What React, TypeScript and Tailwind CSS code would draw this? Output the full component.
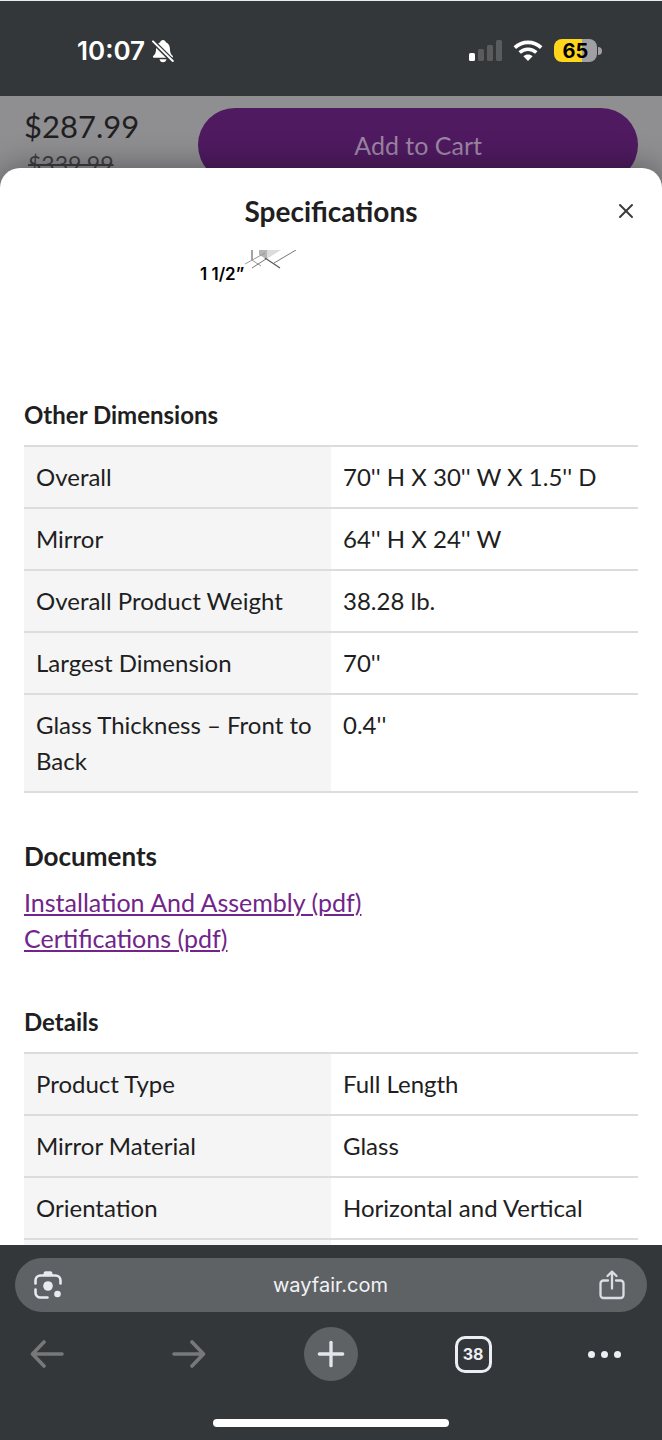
import { Plus, X } from "lucide-react";

interface Spec {
  label: string;
  value: string;
}

const dimensions: Spec[] = [
  { label: "Overall", value: "70'' H X 30'' W X 1.5'' D" },
  { label: "Mirror", value: "64'' H X 24'' W" },
  { label: "Overall Product Weight", value: "38.28 lb." },
  { label: "Largest Dimension", value: "70''" },
  { label: "Glass Thickness – Front to Back", value: "0.4''" },
];

const details: Spec[] = [
  { label: "Product Type", value: "Full Length" },
  { label: "Mirror Material", value: "Glass" },
  { label: "Orientation", value: "Horizontal and Vertical" },
];

function BellOff() {
  return (
    <svg viewBox="0 0 22 24" className="h-6 w-[22px]" fill="white" aria-hidden="true">
      <path d="M11 1c1.500 0 2.500 1 2.800 2.200C16.500 4.300 17.800 6.600 17.900 9.500c.1 4 .8 5.500 2.600 7.300.8.800.6 2-.6 2H2c-1.200 0-1.500-1.200-.6-2 1.900-1.800 2.600-3.300 2.700-7.300.1-2.900 1.500-5.200 4.100-6.300C8.500 2 9.500 1 11 1zM7.500 20.300h7c-.4 1.800-1.700 2.900-3.500 2.900s-3.100-1.100-3.500-2.900z" />
      <path d="M0 1.500 21 22.500" stroke="#34373a" strokeWidth="4.600" />
      <path d="M1 2.300 20.800 22" stroke="white" strokeWidth="1.900" strokeLinecap="round" />
    </svg>
  );
}

function Signal() {
  return (
    <svg viewBox="0 0 34 22" className="h-[22px] w-[34px]" aria-hidden="true">
      <rect x="1" y="13" width="6" height="8" rx="1.500" fill="white" />
      <rect x="10" y="9" width="6" height="12" rx="1.500" fill="#5a5b5d" />
      <rect x="19" y="5" width="6" height="16" rx="1.500" fill="#5a5b5d" />
      <rect x="28" y="0" width="6" height="21" rx="1.500" fill="#5a5b5d" />
    </svg>
  );
}

function Wifi() {
  return (
    <svg viewBox="0 0 30 22" className="h-[22px] w-[30px]" fill="none" stroke="white" strokeWidth="3.600" aria-hidden="true">
      <path d="M1.800 7.600C9.300.6 20.700.6 28.200 7.600" />
      <path d="M6.700 12.500c4.700-4.400 11.900-4.400 16.600 0" />
      <path d="M10.400 16.300c2.600-2.400 6.600-2.400 9.200 0L15 20.900z" fill="white" stroke="none" />
    </svg>
  );
}

function Battery() {
  return (
    <div className="flex items-center gap-px">
      <span className="flex h-[23px] w-[43px] items-center justify-center rounded-lg bg-linear-to-r from-[#fed71d] from-65% to-[#a0a0a2] to-65% font-[Inter,sans-serif] text-xl font-bold text-black">
        65
      </span>
      <span className="h-2 w-1 rounded-r-full bg-[#a0a0a2]" />
    </div>
  );
}

function Lens() {
  return (
    <svg viewBox="0 0 28 28" className="h-7 w-7" fill="none" stroke="#e8eaf2" strokeWidth="2.600" strokeLinecap="round" aria-hidden="true">
      <path d="M1.500 12.500V9.500a5 5 0 0 1 5-5h15a5 5 0 0 1 5 5v3" />
      <path d="M1.500 18.500v3a5 5 0 0 0 5 5h7" />
      <path d="M9 4.500 10 1.200Q10.400.3 11.500.3h5q1.100 0 1.500.9l1 3.300z" fill="#e8eaf2" stroke="none" />
      <circle cx="14" cy="15" r="4.800" fill="#e8eaf2" stroke="none" />
      <circle cx="23.500" cy="23" r="3.300" fill="#e8eaf2" stroke="none" />
    </svg>
  );
}

function Share() {
  return (
    <svg viewBox="0 0 26 30" className="h-[30px] w-[26px]" fill="none" stroke="#dcdde5" strokeWidth="2.300" strokeLinecap="round" strokeLinejoin="round" aria-hidden="true">
      <path d="M9 10.500H4.500a3 3 0 0 0-3 3V25a3 3 0 0 0 3 3h17a3 3 0 0 0 3-3V13.500a3 3 0 0 0-3-3H17" />
      <path d="M13 18.500V2M8.500 6 13 1.700 17.500 6" />
    </svg>
  );
}

function Arrow({ className }: { className?: string }) {
  return (
    <svg viewBox="0 0 34 28" className={`h-7 w-[34px] ${className ?? ""}`} fill="none" stroke="currentColor" strokeWidth="3.600" strokeLinecap="round" strokeLinejoin="round" aria-hidden="true">
      <path d="M32 14H2.500M14 2 2.500 14 14 26" />
    </svg>
  );
}

// bottom corner of the dimensioned mirror drawing, cut off by the scroll area
function MirrorCorner() {
  return (
    <svg viewBox="0 0 54 22" className="h-[22px] w-[54px]" fill="none" aria-hidden="true">
      <path d="M14 0h22L20 10z" fill="#dcdcdc" />
      <path d="M14 0h8v9l-8-4z" fill="#b5b5b5" />
      <path d="M7 0v10" stroke="#666" strokeWidth="1.200" />
      <path d="M0 14 20 3M7 10l9 6" stroke="#999" />
      <path d="M7 18 21 9M29 13 51 0" stroke="#777" />
      <path d="M20 8 35 18" stroke="#555" strokeWidth="1.200" />
    </svg>
  );
}

function SpecTable({ title, rows }: { title: string; rows: Spec[] }) {
  return (
    <table className="w-full table-fixed border-collapse border-b-2 border-[#dcdcdf] text-left" aria-label={title}>
      <tbody>
        {rows.map((row) => (
          <tr key={row.label} className="border-t-2 border-[#dcdcdf] align-top">
            <th scope="row" className="w-1/2 bg-[#f5f5f5] px-3 py-3 font-normal">{row.label}</th>
            <td className="px-3 py-3">{row.value}</td>
          </tr>
        ))}
      </tbody>
    </table>
  );
}

export default function App() {
  return (
    <div className="flex h-screen flex-col overflow-hidden bg-[#8f8f92] font-[Lato,sans-serif] text-2xl/9 text-[#211e22]">
      <header className="flex h-24 shrink-0 items-center justify-between border-t border-[#e3eeee] bg-[#34373a] pt-1 pr-[60px] pl-[77px]">
        <div className="flex items-center gap-[7px]">
          <span className="font-[Inter,sans-serif] text-[26px] font-semibold text-white">10:07</span>
          <BellOff />
        </div>
        <div className="flex items-center gap-[11px]">
          <Signal />
          <Wifi />
          <Battery />
        </div>
      </header>

      <div className="flex h-[72px] shrink-0 items-start gap-[59px] overflow-hidden px-6 pt-3">
        <div className="shrink-0">
          <p className="text-[31px]/9">$287.99</p>
          <p className="pl-1 text-[23px]/10 text-[#3f3d42] line-through">$339.99</p>
        </div>
        <button className="h-[74px] flex-1 rounded-full bg-[#4f1a60] text-[25px] text-[#9b86a3]">Add to Cart</button>
      </div>

      <section role="dialog" aria-label="Specifications" className="relative z-10 flex min-h-0 flex-1 flex-col rounded-t-[20px] bg-white shadow-[0_0_32px_rgba(0,0,0,0.4)]">
        <div className="grid h-[82px] shrink-0 grid-cols-[1fr_auto_1fr] items-center px-6 pt-1">
          <h2 className="col-start-2 text-[28px]/9 font-bold">Specifications</h2>
          <button aria-label="Close" className="justify-self-end">
            <X className="h-6 w-6 text-[#3c3a3e]" strokeWidth={2} />
          </button>
        </div>

        <div className="min-h-0 flex-1 overflow-hidden px-6">
          <figure className="flex h-[147px] items-start gap-px pl-44">
            <figcaption className="pt-3 font-[Inter,sans-serif] text-[17px]/6 font-semibold text-black">1 1/2”</figcaption>
            <MirrorCorner />
          </figure>

          <h3 className="pb-3 font-bold">Other Dimensions</h3>
          <SpecTable title="Other Dimensions" rows={dimensions} />

          <h3 className="pt-[45px] pb-[10px] text-[26px]/9 font-bold">Documents</h3>
          <ul className="text-[25px]/9 text-[#71258a] underline decoration-2 underline-offset-2">
            <li><a href="#installation">Installation And Assembly (pdf)</a></li>
            <li><a href="#certifications">Certifications (pdf)</a></li>
          </ul>

          <h3 className="pt-12 pb-3 font-bold">Details</h3>
          <SpecTable title="Details" rows={details} />
          <div className="h-9 w-1/2 bg-[#f5f5f5]" />
        </div>
      </section>

      <footer className="relative z-10 shrink-0 bg-[#34373a] pt-[13px] pb-[13px]">
        <div className="mx-[15px] flex h-[54px] items-center justify-between rounded-full bg-[#5f6265] pr-[22px] pl-[19px]">
          <button aria-label="Search with camera"><Lens /></button>
          <button className="font-[Inter,sans-serif] text-xl text-[#f1f2f4]">wayfair.com</button>
          <button aria-label="Share"><Share /></button>
        </div>
        <nav className="flex items-center justify-between px-5 pt-[15px] pb-[38px] text-[#77787a]">
          <button aria-label="Back" className="flex h-[54px] w-[54px] items-center justify-center">
            <Arrow />
          </button>
          <button aria-label="Forward" className="flex h-[54px] w-[54px] items-center justify-center">
            <Arrow className="rotate-180" />
          </button>
          <button aria-label="New tab" className="flex h-[54px] w-[54px] items-center justify-center rounded-full bg-[#5f6265] text-[#e4e5ea]">
            <Plus className="h-10 w-10" strokeWidth={2} />
          </button>
          <button aria-label="Tabs" className="flex h-[54px] w-[54px] items-center justify-center">
            <span className="flex h-[37px] w-[37px] items-center justify-center rounded-[10px] border-3 border-[#eceef4] font-[Inter,sans-serif] text-base font-bold text-[#eceef4]">38</span>
          </button>
          <button aria-label="More" className="flex h-[54px] w-[54px] items-center gap-[6px]">
            <span className="h-[7px] w-[7px] rounded-full bg-[#eceef4]" />
            <span className="h-[7px] w-[7px] rounded-full bg-[#eceef4]" />
            <span className="h-[7px] w-[7px] rounded-full bg-[#eceef4]" />
          </button>
        </nav>
        <div className="mx-auto h-2 w-[236px] rounded-full bg-white" />
      </footer>
    </div>
  );
}
